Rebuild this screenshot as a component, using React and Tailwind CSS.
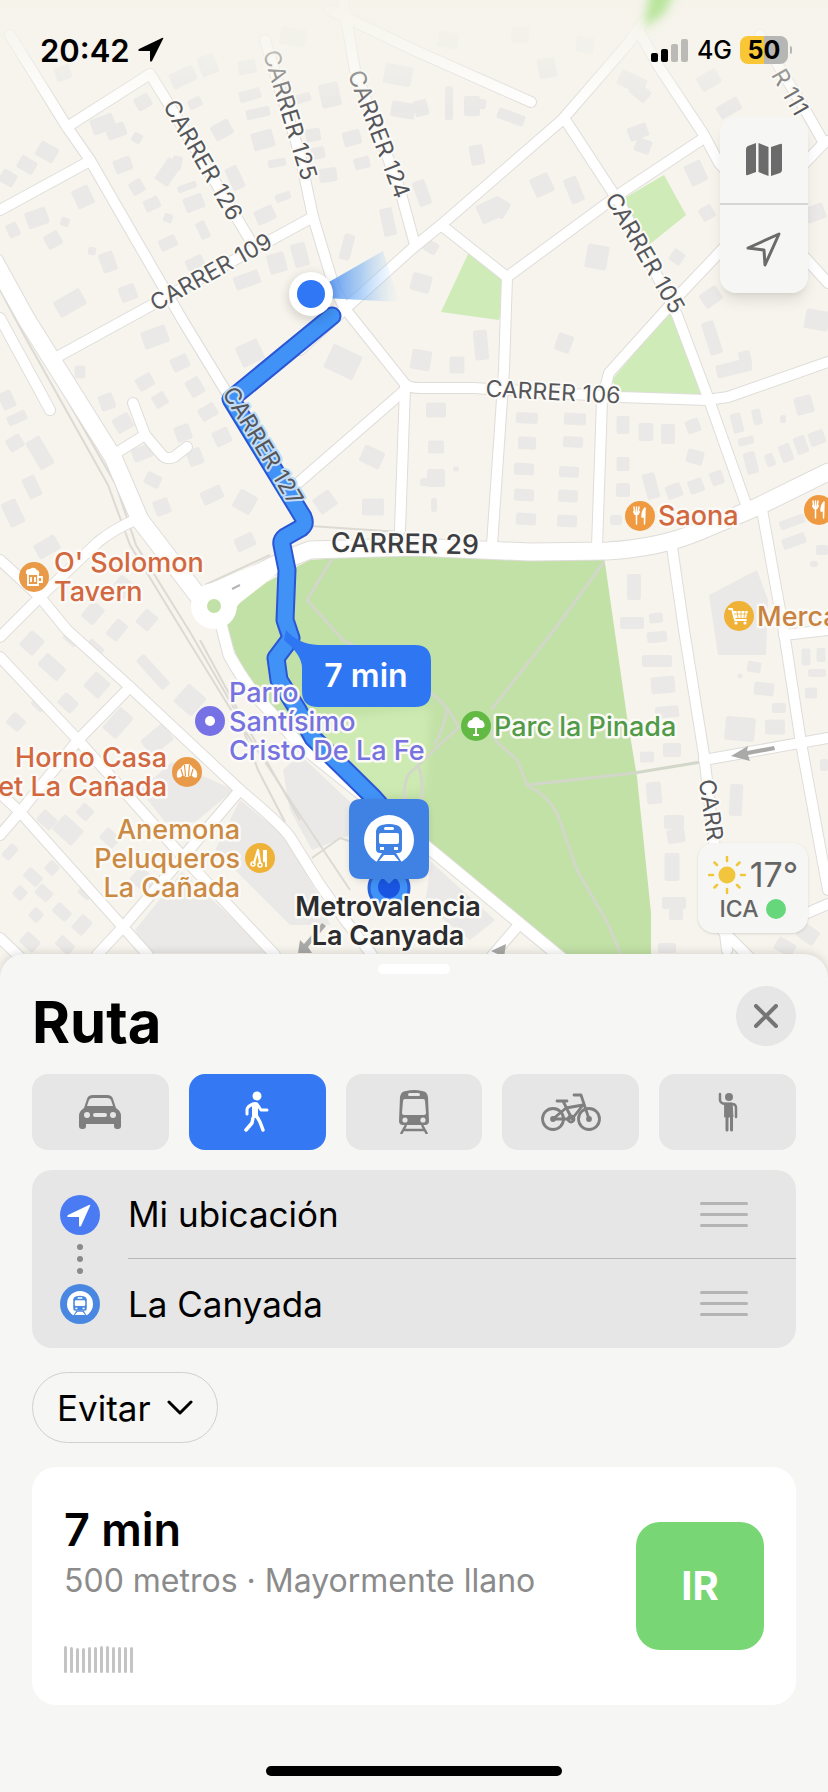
import React from "react";

// x, y, width, height, rotation
const BUILDINGS = [
  [63, 73, 16, 14, -20], [143, 102, 16, 14, -30], [183, 77, 26, 16, -25], [195, 103, 14, 10, -25], [208, 65, 18, 20, -20],
  [222, 130, 20, 16, -30], [103, 124, 24, 16, -20], [116, 131, 20, 14, -20], [137, 138, 10, 10, 30], [47, 152, 20, 16, 30],
  [27, 165, 18, 14, 30], [8, 178, 16, 14, 30], [123, 165, 18, 14, -20], [168, 172, 16, 26, 35], [177, 163, 10, 14, 10],
  [137, 187, 14, 14, -30], [152, 204, 16, 12, -25], [187, 187, 20, 7, -20], [194, 203, 20, 15, -20], [235, 178, 13, 24, -25],
  [83, 197, 18, 20, -25], [37, 218, 22, 17, -20], [65, 222, 9, 9, 20], [53, 240, 16, 15, -30], [13, 230, 12, 14, -25],
  [168, 218, 9, 9, 20], [203, 230, 10, 18, -25], [168, 243, 18, 12, -25], [108, 262, 15, 20, -20], [92, 251, 8, 8, 10],
  [128, 293, 17, 16, -20], [70, 303, 30, 18, -30], [195, 263, 18, 12, -25], [265, 215, 20, 15, -25], [283, 197, 16, 8, -20],
  [247, 280, 26, 14, -20], [277, 263, 18, 20, -15], [300, 255, 15, 24, -15], [250, 95, 22, 11, -15], [258, 113, 24, 10, -12],
  [263, 140, 22, 18, -15], [247, 67, 18, 14, -10], [293, 37, 26, 18, 10], [330, 95, 20, 24, -12], [303, 98, 16, 9, -15],
  [313, 135, 15, 13, -10], [318, 153, 14, 12, -10], [277, 163, 18, 8, -10], [328, 175, 18, 14, -8], [352, 138, 18, 15, -15],
  [362, 163, 16, 12, -15], [398, 75, 28, 20, 10], [403, 110, 24, 16, 10], [388, 222, 13, 28, -12], [347, 247, 11, 26, 15],
  [421, 108, 14, 16, -15], [449, 103, 8, 34, 0], [472, 106, 16, 20, 0], [482, 104, 8, 10, 10], [511, 117, 28, 11, 20],
  [477, 155, 14, 20, -10], [547, 68, 18, 20, -10], [491, 210, 26, 20, -25], [500, 208, 16, 18, 30], [542, 185, 20, 20, -25],
  [574, 190, 14, 26, -22], [632, 82, 28, 16, 25], [640, 92, 20, 14, 40], [638, 132, 20, 14, -20], [643, 146, 16, 14, 20],
  [709, 80, 22, 16, -30], [729, 108, 24, 14, -30], [696, 173, 18, 22, -25], [597, 257, 22, 24, 10], [677, 257, 13, 13, 35],
  [707, 213, 14, 14, -30], [711, 297, 20, 16, -35], [421, 283, 20, 18, 15], [431, 247, 14, 12, 30], [422, 193, 13, 26, -20],
  [815, 213, 20, 16, -20], [817, 320, 24, 20, 10], [448, 40, 20, 16, 10], [520, 35, 18, 16, 0], [585, 45, 18, 16, 10],
  [155, 337, 26, 18, -20], [180, 363, 18, 14, -25], [80, 372, 11, 13, 0], [145, 382, 17, 14, -30], [195, 387, 15, 18, -30],
  [107, 402, 15, 16, -20], [160, 400, 14, 14, -30], [123, 423, 18, 16, -30], [208, 412, 18, 14, -30], [222, 437, 17, 16, -25],
  [183, 433, 16, 16, -20], [142, 453, 20, 14, -20], [195, 457, 15, 17, -20], [250, 353, 24, 22, -25], [343, 362, 32, 26, 25],
  [7, 400, 14, 18, -25], [17, 418, 20, 10, -25], [40, 453, 16, 32, -30], [15, 443, 16, 14, -30], [32, 487, 14, 22, -25],
  [13, 513, 16, 26, -25], [153, 480, 16, 13, 25], [162, 507, 16, 16, -20], [212, 495, 22, 14, -25], [245, 502, 20, 20, 30],
  [245, 542, 20, 14, -25], [47, 547, 24, 16, -30], [325, 502, 20, 18, -35], [373, 507, 22, 17, 0], [372, 457, 22, 18, 25],
  [93, 613, 16, 20, 40], [123, 587, 18, 18, 40], [117, 630, 14, 20, 40], [147, 620, 16, 18, 40], [481, 345, 14, 30, -5],
  [421, 360, 20, 20, 10], [457, 365, 15, 17, 0], [564, 343, 16, 18, 20], [436, 410, 20, 15, 0], [436, 447, 16, 13, 0],
  [436, 478, 18, 18, 0], [426, 482, 12, 8, 0], [456, 469, 6, 5, 0], [434, 505, 6, 14, 0], [527, 418, 22, 11, 3], [575, 419, 22, 12, 3],
  [527, 443, 18, 13, 3], [573, 442, 20, 11, 3], [524, 469, 20, 12, 3], [569, 472, 20, 11, 3], [524, 495, 20, 12, 3],
  [568, 496, 20, 12, 3], [526, 519, 20, 12, 3], [567, 521, 20, 12, 3], [623, 425, 13, 18, 0], [646, 432, 15, 18, 0],
  [668, 434, 14, 20, 0], [693, 426, 14, 14, -20], [623, 464, 13, 14, 0], [695, 457, 17, 14, 15], [623, 490, 14, 14, 0],
  [651, 486, 13, 26, -15], [674, 491, 16, 14, -20], [696, 486, 15, 14, -20], [717, 478, 13, 14, -20], [616, 520, 12, 10, 0],
  [712, 338, 13, 34, -18], [734, 368, 36, 13, -14], [745, 358, 12, 14, -14], [737, 423, 11, 20, -14], [757, 417, 9, 16, -14],
  [804, 405, 18, 18, -15], [746, 441, 16, 8, -14], [751, 463, 12, 22, -14], [770, 460, 9, 13, -20], [786, 453, 12, 18, -20],
  [801, 445, 12, 18, -20], [817, 438, 16, 14, -20], [783, 419, 6, 8, 0], [792, 522, 26, 9, -20], [794, 541, 24, 11, -20],
  [822, 550, 12, 10, 0], [814, 564, 8, 6, 0], [634, 587, 14, 26, 0], [632, 623, 24, 12, 0], [656, 618, 14, 10, -5],
  [657, 637, 20, 11, -5], [657, 661, 30, 12, 0], [663, 685, 24, 17, -5], [667, 712, 24, 12, -5], [672, 750, 18, 14, 0],
  [647, 757, 14, 11, 0], [754, 667, 14, 11, 10], [764, 689, 20, 13, 5], [779, 708, 14, 10, 0], [740, 729, 30, 24, 5],
  [775, 727, 20, 15, 0], [740, 676, 5, 5, 0], [654, 793, 15, 22, -5], [674, 822, 20, 14, 0], [676, 836, 18, 14, -8],
  [672, 867, 15, 28, 0], [674, 903, 24, 12, 0], [676, 914, 14, 12, 0], [667, 948, 18, 10, 0], [736, 800, 13, 32, 3],
  [806, 657, 9, 17, 0], [821, 655, 9, 14, 0], [811, 693, 12, 11, 0], [817, 673, 18, 8, 0], [824, 765, 8, 12, 0],
  [808, 934, 20, 16, 35], [785, 947, 20, 14, 30], [32, 643, 18, 20, 42], [52, 667, 26, 16, 42], [93, 650, 18, 16, 42],
  [72, 638, 16, 12, 42], [97, 685, 20, 20, 42], [68, 703, 18, 14, 42], [40, 703, 14, 14, 42], [16, 722, 16, 14, 42],
  [153, 672, 40, 11, 48], [190, 700, 24, 24, 42], [118, 723, 18, 28, 42], [157, 740, 28, 20, -40], [47, 820, 18, 14, 42],
  [68, 830, 26, 20, 42], [85, 812, 14, 14, 42], [110, 838, 18, 14, 42], [10, 852, 10, 16, 42], [33, 877, 18, 12, 42],
  [20, 893, 12, 12, 42], [44, 893, 16, 12, 42], [62, 912, 18, 12, 42], [82, 925, 14, 18, 42], [36, 915, 12, 12, 42],
  [30, 942, 18, 14, 42], [143, 880, 22, 18, 42], [52, 868, 12, 12, 42], [86, 892, 14, 12, 42], [65, 945, 18, 12, 42],
];

const PLOTS = [
  "709,595 757,570 768,600 766,655 718,655",
  "283,770 300,755 350,802 350,835 312,850 290,810",
  "140,790 172,762 234,790 195,822 165,822",
  "240,800 285,836 318,895 330,925 290,925 215,850",
  "135,930 182,872 270,953 150,953",
  "431,862 495,920 470,940 425,905",
];

const MINOR_ROADS = [
  "M10 35 L67 127 L90 160 L117 207 L183 321 L230 398",
  "M67 127 L150 74 L165 98 L250 240",
  "M0 210 L88 162",
  "M52 362 L57 357 L150 306 L313 217",
  "M265 40 L300 155 L313 217 L335 290 L346 310",
  "M343 0 L355 70 L400 190 L415 245",
  "M300 350 L346 308 L414 247 L441 225 L562 120 L627 45 L645 20",
  "M330 10 L414 50 L531 102",
  "M441 225 L507 277 L504 370 L492 545",
  "M507 277 L621 193 L704 138",
  "M564 118 L621 205 L677 315 L709 400 L747 507",
  "M640 33 L659 67 L704 135 L719 163 L828 283",
  "M760 35 L807 113 L824 143 L717 255 L681 293 L609 373 L602 400 L597 547",
  "M824 143 L828 141",
  "M346 310 L405 384 Q409 388 420 388 L474 388 L620 397 L707 400 L728 397 L828 362",
  "M405 390 L298 483",
  "M405 388 L400 530",
  "M0 318 L50 410",
  "M133 403 L145 435 L162 455 Q166 460 174 457 L187 447",
  "M145 435 L113 455",
  "M140 518 Q115 528 98 542 L40 597 L0 637",
  "M0 560 L40 597 L67 630 L130 687 L240 790 Q282 825 290 837 L320 885 L345 920 L372 955",
  "M0 657 L78 740 L183 857 L275 955",
  "M130 687 L78 740 L20 812 L0 835",
  "M0 793 L20 812 L123 927 L148 955",
  "M240 790 L183 857 L123 927 L97 955",
  "M0 938 L20 957",
  "M672 547 L684 630 L704 755 L727 950",
  "M762 510 L784 632 L801 743 L828 890",
  "M784 635 L828 630",
  "M704 760 L828 738",
  "M805 914 L828 904",
  "M722 930 L750 958",
  "M517 927 L492 956",
];

const PARK_ROAD = "M220 620 L229 655 Q240 675 255 695 L300 745 L431 850 L570 965";

const MAJOR_ROADS = [
  "M-5 262 L27 320 L113 457 L140 520 L205 605",
  "M220 600 Q255 570 310 550 L414 547 L530 552 L607 551 Q660 548 700 531 L757 507 L828 472",
];

const PARK_PATHS = [
  "M333 557 L307 600 L343 640 L400 670 L431 693 Q440 700 447 708 L459 727 L431 753 L408 775 Q402 790 406 800",
  "M447 708 Q444 730 434 745 M418 765 Q424 780 421 800",
  "M604 562 L574 603 L554 630 L491 710",
  "M484 718 L497 742 L517 760 L527 785 Q548 796 557 813 L577 870 L607 922 L621 955",
  "M527 785 L634 773 L701 762",
];

const ROUTE = "M332 316 L231 399 L303 517 Q306 524 301 528 L285 537 Q281 540 282 545 L287 570 L285 620 L291 638 L276 658 L279 680 L298 710 L313 738 L373 797 L389 815";

const STREETS = [
  { text: "CARRER 126", x: 203, y: 160, angle: 60 },
  { text: "CARRER 125", x: 290, y: 115, angle: 73 },
  { text: "CARRER 124", x: 379, y: 134, angle: 69 },
  { text: "CARRER 109", x: 211, y: 272, angle: -29 },
  { text: "CARRER 105", x: 645, y: 253, angle: 60 },
  { text: "CARRER 106", x: 553, y: 392, angle: 3 },
  { text: "R 111", x: 790, y: 92, angle: 60 },
  { text: "CARR", x: 711, y: 810, angle: 82 },
];

const PLACES = [
  { lines: ["O' Solomon", "Tavern"], x: 54, y: 572, color: "#d2683f" },
  { lines: ["Horno Casa", "et La Cañada"], x: 167, y: 767, color: "#d2683f", anchor: "end" },
  { lines: ["Anemona", "Peluqueros", "La Cañada"], x: 240, y: 839, color: "#cb8a43", anchor: "end" },
  { lines: ["Santísimo", "Cristo De La Fe"], x: 229, y: 731, color: "#7672e0" },
  { lines: ["Parro"], x: 229, y: 702, color: "#7672e0" },
  { lines: ["Saona"], x: 658, y: 525, color: "#d2683f" },
  { lines: ["Merca"], x: 757, y: 626, color: "#c98240" },
  { lines: ["Parc la Pinada"], x: 494, y: 736, color: "#519a48" },
];

function MapLabel({ lines, x, y, color, anchor = "start", weight = 500 }) {
  return (
    <text x={x} y={y} fill={color} stroke="#fbfaf6" strokeWidth="5" strokeLinejoin="round" paintOrder="stroke" fontSize="27" fontWeight={weight} textAnchor={anchor}>
      {lines.map((line, i) => (
        <tspan key={line} x={x} dy={i === 0 ? 0 : 29}>{line}</tspan>
      ))}
    </text>
  );
}

function Poi({ x, y, color, children }) {
  return (
    <g transform={`translate(${x} ${y})`}>
      <circle r="15" fill={color} />
      {children}
    </g>
  );
}

function Cutlery() {
  return (
    <g stroke="#fff" strokeLinecap="round" strokeLinejoin="round" fill="none">
      <path d="M-6 -9 L-5 -2 M-3.5 -9 L-3.5 8 M-1 -9 L-2 -2" strokeWidth="1.5" />
      <path d="M-6 -4 Q-3.5 1 -1 -4" strokeWidth="2" />
      <path d="M5 -8 Q2 -5 2 1 L4.5 1 L4.5 8 Z" fill="#fff" strokeWidth="1.5" />
    </g>
  );
}

function StationGlyph({ color }) {
  return (
    <>
      <circle r="25" fill="#fff" />
      <path d="M-13 -9 Q-12 -14 -7 -15 Q0 -17 7 -15 Q12 -14 13 -9 L13 9 Q13 13 9 13 L-9 13 Q-13 13 -13 9 Z" fill={color} />
      <rect x="-5" y="-13" width="10" height="3" rx="1.5" fill="#fff" />
      <rect x="-10" y="-7" width="20" height="11" rx="2" fill="#fff" />
      <rect x="-9" y="7" width="4" height="3" fill="#fff" />
      <rect x="5" y="7" width="4" height="3" fill="#fff" />
      <path d="M-7 13 L-15 26 L15 26 L7 13 Z" fill={color} />
      <path d="M-5 15 L5 15 L10 21 L-10 21 Z" fill="#fff" />
    </>
  );
}

function MapCanvas() {
  return (
    <svg viewBox="0 0 828 978" className="block w-full h-auto" role="img" aria-label="Mapa">
      <defs>
        <linearGradient id="topFade" x1="0" y1="0" x2="0" y2="1">
          <stop offset="0" stopColor="#f5f3ea" stopOpacity="0.9" />
          <stop offset="0.45" stopColor="#f6f4ec" stopOpacity="0.7" />
          <stop offset="1" stopColor="#f6f4ec" stopOpacity="0" />
        </linearGradient>
        <linearGradient id="cone" x1="0" y1="0" x2="1" y2="0">
          <stop offset="0" stopColor="#2f7bf0" stopOpacity="0.85" />
          <stop offset="0.5" stopColor="#79b2f4" stopOpacity="0.6" />
          <stop offset="1" stopColor="#b5d6f8" stopOpacity="0" />
        </linearGradient>
        <filter id="soft" x="-50%" y="-50%" width="200%" height="200%">
          <feGaussianBlur stdDeviation="5" />
        </filter>
      </defs>

      <rect width="828" height="978" fill="#f6f4ec" />
      <g fill="#eae9e7">
        {PLOTS.map((p) => <polygon key={p} points={p} />)}
        {BUILDINGS.map(([x, y, w, h, r]) => (
          <rect key={`${x}-${y}`} x={x - w / 2} y={y - h / 2} width={w} height={h} rx="2" transform={`rotate(${r} ${x} ${y})`} />
        ))}
      </g>

      <g fill="#cfebb8">
        <polygon points="623,199 664,175 686,215 645,248" />
        <polygon points="469,252 507,280 499,320 441,312" />
        <polygon points="672,308 612,380 620,397 709,399" />
      </g>
      <path d="M223 620 L240 603 L267 582 L310 560 L414 553 L604 556 L616 640 L627 717 L637 777 L651 913 L651 978 L590 978 L431 850 L300 745 L250 690 Z" fill="#c2e1a6" />
      <path d="M306 722 L430 708 L425 790 L385 795 L345 765 Z" fill="#cdeab2" filter="url(#soft)" />
      <g fill="none" stroke="#d2d7c9" strokeWidth="3" strokeLinejoin="round">
        {PARK_PATHS.map((d) => <path key={d} d={d} />)}
      </g>

      <g fill="none" stroke="#dcdad3" strokeWidth="2">
        <path d="M0 278 L30 335 L116 485 L136 545 L190 632 L238 715 L258 770 L285 822" />
        <path d="M0 290 L24 335 L108 485 L130 545 L183 632 L228 705 L290 800 L350 890" />
        <path d="M200 640 L246 725 L300 820 M312 858 L340 838 L352 842 M205 585 L270 555 M310 526 L400 532" />
      </g>

      <g fill="none" strokeLinecap="round" strokeLinejoin="round">
        {MINOR_ROADS.map((d) => <path key={d} d={d} stroke="#dfddda" strokeWidth="12" />)}
        <path d={PARK_ROAD} stroke="#dfddda" strokeWidth="13" />
        {MAJOR_ROADS.map((d) => <path key={d} d={d} stroke="#dfddda" strokeWidth="19" />)}
        {MINOR_ROADS.map((d) => <path key={d} d={d} stroke="#fff" strokeWidth="10" />)}
        <path d={PARK_ROAD} stroke="#fff" strokeWidth="11" />
        {MAJOR_ROADS.map((d) => <path key={d} d={d} stroke="#fff" strokeWidth="17" />)}
      </g>
      <path d="M195 590 L250 567 L285 553 L275 575 L240 602 L228 620 Z" fill="#fff" />
      <circle cx="214" cy="606" r="23" fill="#fff" />
      <circle cx="214" cy="606" r="7" fill="#c2e1a6" />
      <path d="M232 589 L240 585" stroke="#b5b5b5" strokeWidth="2" />

      <g fill="#a9a9a7">
        <path d="M731 756 L748 746 L747 751 L774 746 L775 750 L748 755 L750 761 Z" />
        <path d="M298 953 L300 940 L304 944 L322 923 L326 926 L308 947 L312 953 Z" />
        <path d="M491 951 L506 944 L504 957 Z" />
      </g>

      <path d={ROUTE} fill="none" stroke="#2a56d6" strokeWidth="19" strokeLinecap="round" strokeLinejoin="round" />
      <path d={ROUTE} fill="none" stroke="#4092f6" strokeWidth="15" strokeLinecap="round" strokeLinejoin="round" />

      <path d="M322 286 L383 251 L399 302 L325 298 Z" fill="url(#cone)" />
      <circle cx="311" cy="297" r="24" fill="#000" opacity="0.12" filter="url(#soft)" />
      <circle cx="311" cy="294" r="22" fill="#fff" />
      <circle cx="311" cy="294" r="14" fill="#3077f5" />

      <g fontSize="23" fill="#55565a" stroke="#fbfaf6" strokeWidth="4" strokeLinejoin="round" paintOrder="stroke" textAnchor="middle">
        {STREETS.map((s) => (
          <text key={s.text} x={s.x} y={s.y} dy="8" transform={`rotate(${s.angle} ${s.x} ${s.y})`}>{s.text}</text>
        ))}
        <text x="263" y="446" dy="8" transform="rotate(59 263 446)" stroke="#c3ddf8">CARRER 127</text>
        <text x="405" y="544" dy="9" fontSize="27" fontWeight="500" fill="#3d3e42" transform="rotate(1 405 544)">CARRER 29</text>
      </g>
      <rect width="828" height="110" fill="url(#topFade)" />
      <polygon points="650,-10 676,-10 664,14 644,28" fill="#b9e59d" filter="url(#soft)" />

      {PLACES.map((p) => <MapLabel key={p.lines[0]} {...p} />)}

      <Poi x={34} y={577} color="#e99a48">
        <path d="M-6 -3 L4 -3 L4 8 L-6 8 Z M4 0 L8 0 L8 5 L4 5 M-3 0 L-3 5 M1 0 L1 5" fill="none" stroke="#fff" strokeWidth="1.8" />
        <path d="M-8 -3 Q-9 -8 -4 -8 Q0 -11 3 -7 Q6 -6 5 -3 Z" fill="#fff" />
      </Poi>
      <Poi x={640} y={516} color="#ef9a41"><Cutlery /></Poi>
      <Poi x={819} y={510} color="#ef9a41"><Cutlery /></Poi>
      <Poi x={739} y={616} color="#f0b236">
        <path d="M-10 -7 L-7 -7 L-4 4 L7 4" fill="none" stroke="#fff" strokeWidth="1.8" strokeLinecap="round" />
        <path d="M-7 -5 L9 -5 L7 2 L-5 2 Z" fill="#fff" />
        <path d="M-5 -2 L8 -2 M-2 -5 L-1 2 M2 -5 L2 2 M6 -5 L5 2" stroke="#f0b236" strokeWidth="0.8" />
        <circle cx="-3" cy="7" r="1.6" fill="#fff" />
        <circle cx="6" cy="7" r="1.6" fill="#fff" />
      </Poi>
      <Poi x={187} y={772} color="#e99a48">
        <path d="M-10 5 Q-11 -2 -6 -4 Q-4 -8 0 -8 Q4 -8 6 -4 Q11 -2 10 5 Q8 7 5 4 L3 4 L0 5 L-3 4 L-5 4 Q-8 7 -10 5 Z" fill="#fff" />
        <path d="M-6 -3 L-4 4 M-2.5 -7 L-1.5 4 M2.5 -7 L1.5 4 M6 -3 L4 4" stroke="#e99a48" strokeWidth="1.2" />
      </Poi>
      <Poi x={260} y={858} color="#efb239">
        <path d="M-2 -8 L-6 5 M-2 -8 L0 5" stroke="#fff" strokeWidth="2.2" strokeLinecap="round" />
        <circle cx="-7" cy="6" r="2" fill="none" stroke="#fff" strokeWidth="1.5" />
        <circle cx="0" cy="7" r="2" fill="none" stroke="#fff" strokeWidth="1.5" />
        <path d="M3 -8 L7 -8 L7 9 L5 9 L5 4 L3 4 Z" fill="#fff" />
      </Poi>
      <Poi x={210} y={721} color="#7672e6">
        <circle r="5" fill="#fff" />
      </Poi>
      <Poi x={476} y={726} color="#62b944">
        <path d="M-6 2 Q-10 1 -8 -3 Q-7 -6 -4 -6 Q-3 -9 0 -9 Q3 -9 4 -6 Q7 -6 8 -3 Q10 1 6 2 Z" fill="#fff" />
        <path d="M0 0 L0 9 M-3 9 L3 9" stroke="#fff" strokeWidth="2" />
      </Poi>

      <path d="M286 630 Q298 644 318 645 L415 645 Q431 645 431 661 L431 691 Q431 707 415 707 L318 707 Q302 707 302 691 L302 668 Q302 655 284 640 Z" fill="#2f76f3" />
      <text x="366" y="687" fill="#fff" fontSize="32" fontWeight="600" textAnchor="middle">7 min</text>

      <circle cx="389" cy="888" r="20" fill="#4092f6" stroke="#2a62dc" strokeWidth="3" />
      <circle cx="389" cy="887" r="11" fill="#1a55e2" />
      <rect x="352" y="803" width="74" height="76" rx="12" fill="#000" opacity="0.2" filter="url(#soft)" />
      <path d="M361 799 L417 799 Q429 799 429 811 L429 867 Q429 879 417 879 L394 879 L389 884 L384 879 L361 879 Q349 879 349 867 L349 811 Q349 799 361 799 Z" fill="#3f82e4" />
      <g transform="translate(389 840)"><StationGlyph color="#3f82e4" /></g>
      <MapLabel lines={["Metrovalencia", "La Canyada"]} x={388} y={916} color="#2c2c2e" anchor="middle" weight={600} />
    </svg>
  );
}

function StatusBar() {
  return (
    <header className="absolute inset-x-0 top-0 h-[100px] flex items-center justify-between pl-10 pr-9 text-black">
      <div className="flex items-center gap-2">
        <span className="text-[31px] leading-none font-semibold">20:42</span>
        <svg viewBox="0 0 26 26" className="w-[26px] h-[26px]" aria-hidden="true">
          <path d="M1 12 L24 1 Q26 0 25 2 L14 24 Q12 26 12 23 L12 14 L2 14 Q-1 14 1 12 Z" fill="currentColor" />
        </svg>
      </div>
      <div className="flex items-center gap-2">
        <svg viewBox="0 0 38 24" className="w-[38px] h-6" aria-hidden="true">
          <rect x="0" y="15" width="7" height="9" rx="2" />
          <rect x="10" y="11" width="7" height="13" rx="2" />
          <rect x="20" y="6" width="7" height="18" rx="2" fill="#bbbab6" />
          <rect x="30" y="1" width="7" height="23" rx="2" fill="#bbbab6" />
        </svg>
        <span className="text-[25px] leading-none font-medium">4G</span>
        <div className="flex items-center gap-[2px]">
          <div className="w-12 h-7 rounded-lg bg-linear-to-r from-[#f9c636] from-50% to-[#b6b6b4] to-50% flex items-center justify-center">
            <span className="text-[25px] leading-none font-bold">50</span>
          </div>
          <div className="w-[2px] h-2 rounded-r bg-[#b6b6b4]" />
        </div>
      </div>
    </header>
  );
}

function MapControls() {
  return (
    <div className="absolute right-5 top-[117px] w-[88px] rounded-2xl bg-[#f6f6f4] text-[#6b6b6b] shadow-lg divide-y-2 divide-[#d6d6d5]">
      <button type="button" aria-label="Modo de mapa" className="w-full h-[88px] flex items-center justify-center">
        <svg viewBox="0 0 36 34" className="w-9 h-[34px]" fill="currentColor" aria-hidden="true">
          <path d="M0 6 Q0 4 2 3 L10 0 L10 29 L2 32 Q0 33 0 31 Z" />
          <path d="M12.5 0 L22.5 4 L22.5 33 L12.5 29 Z" />
          <path d="M25 4 L34 1 Q36 0 36 2 L36 27 Q36 29 34 30 L25 33 Z" />
        </svg>
      </button>
      <button type="button" aria-label="Mi ubicación" className="w-full h-[88px] flex items-center justify-center">
        <svg viewBox="0 0 36 36" className="w-9 h-9" fill="none" stroke="currentColor" strokeWidth="3" strokeLinejoin="round" aria-hidden="true">
          <path d="M2 17 L33 3 L19 34 L18 19 Z" />
        </svg>
      </button>
    </div>
  );
}

function Weather() {
  return (
    <div className="absolute right-5 bottom-[45px] w-[110px] h-[90px] rounded-2xl bg-[#f6f6f4] shadow-sm text-[#656565] flex flex-col items-center justify-center gap-1">
      <div className="flex items-center gap-1">
        <svg viewBox="-19 -19 38 38" className="w-[38px] h-[38px]" aria-hidden="true">
          <circle r="8.5" fill="#f2c63c" />
          <path d="M0 -18 V-14 M0 14 V18 M-18 0 H-14 M14 0 H18 M-12.5 -12.5 L-10 -10 M12.5 -12.5 L10 -10 M-12.5 12.5 L-10 10 M12.5 12.5 L10 10" stroke="#f2c63c" strokeWidth="2.5" strokeLinecap="round" />
        </svg>
        <span className="text-[34px] leading-none">17°</span>
      </div>
      <div className="flex items-center gap-2">
        <span className="text-[23px] leading-none font-medium">ICA</span>
        <span className="w-5 h-5 rounded-full bg-[#67d77c]" />
      </div>
    </div>
  );
}

function CarIcon() {
  return (
    <svg viewBox="0 0 42 34" className="w-[42px] h-[34px]" aria-hidden="true">
      <path d="M8 4 Q9 0 14 0 L28 0 Q33 0 34 4 L37 13 Q42 16 42 21 L42 31 Q42 34 39 34 L38 34 Q35 34 35 31 L35 29 L7 29 L7 31 Q7 34 4 34 L3 34 Q0 34 0 31 L0 21 Q0 16 5 13 Z" fill="currentColor" />
      <path d="M10 5 Q11 3 14 3 L28 3 Q31 3 32 5 L34 11 L8 11 Z" fill="#e6e6e6" />
      <circle cx="8" cy="20" r="3" fill="#e6e6e6" />
      <circle cx="34" cy="20" r="3" fill="#e6e6e6" />
      <rect x="14" y="18" width="14" height="4" rx="2" fill="#e6e6e6" />
    </svg>
  );
}

function WalkIcon() {
  return (
    <svg viewBox="0 0 26 42" className="w-[26px] h-[42px]" fill="none" stroke="currentColor" strokeLinecap="round" strokeLinejoin="round" aria-hidden="true">
      <circle cx="13" cy="5" r="4.5" fill="currentColor" stroke="none" />
      <path d="M11 14 L11 24" strokeWidth="6" />
      <path d="M9 13 Q4 15 3 18 L3 23" strokeWidth="3" />
      <path d="M13 13 L17 19 L23 19" strokeWidth="3" />
      <path d="M12 24 L16 31 L19 39" strokeWidth="3.5" />
      <path d="M9 27 L8 32 L2 39" strokeWidth="3.5" />
    </svg>
  );
}

function TransitIcon() {
  return (
    <svg viewBox="-15 -21 30 44" className="w-[30px] h-11" aria-hidden="true">
      <path d="M-14 -14 Q-13 -20 -8 -20 Q0 -22 8 -20 Q13 -20 14 -14 L15 10 Q15 14 11 14 L-11 14 Q-15 14 -15 10 Z" fill="currentColor" />
      <rect x="-6" y="-18" width="12" height="3" rx="1.5" fill="#e6e6e6" />
      <path d="M-11 -10 Q-11 -12 -9 -12 L9 -12 Q11 -12 11 -10 L12 2 Q12 4 10 4 L-10 4 Q-12 4 -12 2 Z" fill="#e6e6e6" />
      <circle cx="-9" cy="9" r="2.6" fill="#e6e6e6" />
      <circle cx="9" cy="9" r="2.6" fill="#e6e6e6" />
      <path d="M-8 14 L-13 23 M8 14 L13 23 M-10 19 L10 19" stroke="currentColor" strokeWidth="2.5" />
    </svg>
  );
}

function BikeIcon() {
  return (
    <svg viewBox="0 0 60 38" className="w-[60px] h-[38px]" fill="none" stroke="currentColor" strokeWidth="2.8" strokeLinecap="round" strokeLinejoin="round" aria-hidden="true">
      <circle cx="12" cy="26" r="10.5" />
      <circle cx="48" cy="26" r="10.5" />
      <path d="M12 26 L25 15 L42 12 L31 26 L22 8 M16 8 L26 8 M12 26 L28 26 M48 26 L40 2 L33 2" />
      <circle cx="30" cy="26" r="3" />
      <circle cx="12" cy="26" r="1.5" fill="currentColor" />
      <circle cx="48" cy="26" r="1.5" fill="currentColor" />
    </svg>
  );
}

function HailIcon() {
  return (
    <svg viewBox="0 0 22 42" className="w-[22px] h-[42px]" fill="none" stroke="currentColor" strokeLinecap="round" strokeLinejoin="round" aria-hidden="true">
      <circle cx="12" cy="6" r="4" fill="currentColor" stroke="none" />
      <path d="M3 3 L3 9 Q3 12 8 13" strokeWidth="2.5" />
      <path d="M8 13 L15 13 Q19 13 19 17 L19 26" strokeWidth="2.5" />
      <path d="M8 12 L15 12 L16 26 L8 26 Z" fill="currentColor" strokeWidth="1" />
      <path d="M10 25 L10 39 M14.5 25 L14.5 39" strokeWidth="3" />
    </svg>
  );
}

const MODES = [
  { id: "coche", label: "Coche", Icon: CarIcon },
  { id: "pie", label: "A pie", Icon: WalkIcon, active: true },
  { id: "transporte", label: "Transporte público", Icon: TransitIcon },
  { id: "bici", label: "Bicicleta", Icon: BikeIcon },
  { id: "vtc", label: "Solicitar viaje", Icon: HailIcon },
];

function DragHandle() {
  return (
    <button type="button" aria-label="Reordenar" className="mr-12 w-12 flex flex-col gap-2">
      <span className="block w-full h-[3px] rounded bg-[#b4b4b4]" />
      <span className="block w-full h-[3px] rounded bg-[#b4b4b4]" />
      <span className="block w-full h-[3px] rounded bg-[#b4b4b4]" />
    </button>
  );
}

const ELEVATION = [27, 26, 25, 25, 26, 26, 27, 27, 26, 26, 26, 26];

export default function App() {
  return (
    <main className="min-h-screen flex flex-col bg-[#f6f6f4] overflow-hidden font-[Inter,'Liberation_Sans',sans-serif] text-black">
      <section className="relative">
        <MapCanvas />
        <StatusBar />
        <MapControls />
        <Weather />
      </section>

      <section className="relative -mt-6 flex-1 flex flex-col rounded-t-3xl bg-[#f6f6f4] px-8 pt-[10px] pb-4 shadow-[0_-2px_8px_rgba(0,0,0,0.12)]">
        <div className="mx-auto w-18 h-[10px] rounded-full bg-white" />

        <div className="mt-3 flex items-start justify-between">
          <h1 className="pt-1 text-[58px] leading-[64px] font-bold">Ruta</h1>
          <button type="button" aria-label="Cerrar" className="w-15 h-15 rounded-full bg-[#e6e6e6] text-[#757575] flex items-center justify-center">
            <svg viewBox="0 0 24 24" className="w-6 h-6" stroke="currentColor" strokeWidth="4" strokeLinecap="round" aria-hidden="true">
              <path d="M2 2 L22 22 M22 2 L2 22" />
            </svg>
          </button>
        </div>

        <nav className="mt-5 flex gap-5">
          {MODES.map(({ id, label, Icon, active }) => (
            <button
              key={id}
              type="button"
              aria-label={label}
              aria-pressed={Boolean(active)}
              className={`flex-1 h-19 rounded-2xl flex items-center justify-center ${active ? "bg-[#3478f3] text-white" : "bg-[#e6e6e6] text-[#7f7f7f]"}`}
            >
              <Icon />
            </button>
          ))}
        </nav>

        <div className="mt-5 flex rounded-[20px] bg-[#e6e6e6]">
          <div className="pl-7 w-24 flex flex-col items-start justify-center">
            <svg viewBox="-20 -20 40 129" className="w-10 h-[129px]" aria-hidden="true">
              <circle r="20" fill="#4a7bf2" />
              <path d="M-12 0 L9 -10 Q11 -11 10 -9 L1 11 Q-1 13 -1 10 L-1 2 L-11 2 Q-14 2 -12 0 Z" fill="#fff" />
              <circle cy="32" r="3" fill="#8a8a8a" />
              <circle cy="44" r="3" fill="#8a8a8a" />
              <circle cy="56" r="3" fill="#8a8a8a" />
              <circle cy="89" r="20" fill="#4a87e0" />
              <g transform="translate(0 89) scale(0.52)"><StationGlyph color="#4a87e0" /></g>
            </svg>
          </div>
          <ul className="flex-1 divide-y divide-[#b9b9b9] text-[35px] leading-[40px]">
            <li className="h-[89px] flex items-center justify-between">
              Mi ubicación
              <DragHandle />
            </li>
            <li className="h-[89px] flex items-center justify-between">
              La Canyada
              <DragHandle />
            </li>
          </ul>
        </div>

        <button type="button" aria-haspopup="menu" className="mt-6 self-start h-[71px] px-6 rounded-full border border-[#d0d0d0] flex items-center gap-4 text-[35px] leading-[40px]">
          Evitar
          <svg viewBox="0 0 26 16" className="w-[26px] h-4" fill="none" stroke="currentColor" strokeWidth="3" strokeLinecap="round" strokeLinejoin="round" aria-hidden="true">
            <path d="M2 2 L13 13 L24 2" />
          </svg>
        </button>

        <article className="mt-6 rounded-3xl bg-white p-8 flex items-center justify-between">
          <div>
            <h2 className="pt-1 text-[45px] leading-[54px] font-semibold">7 min</h2>
            <p className="mt-1 text-[32px] leading-[40px] text-[#8b8b8b]">500 metros · Mayormente llano</p>
            <div className="mt-11 h-7 flex items-end gap-[3px]" aria-hidden="true">
              {ELEVATION.map((h, i) => (
                <span key={i} className="w-[3px] rounded bg-[#c4c4c4]" style={{ height: h }} />
              ))}
            </div>
          </div>
          <button type="button" className="w-32 h-32 rounded-3xl bg-[#78d774] text-white text-[40px] leading-none font-bold">IR</button>
        </article>

        <div className="mt-auto mx-auto w-[296px] h-[10px] rounded-full bg-black" />
      </section>
    </main>
  );
}
